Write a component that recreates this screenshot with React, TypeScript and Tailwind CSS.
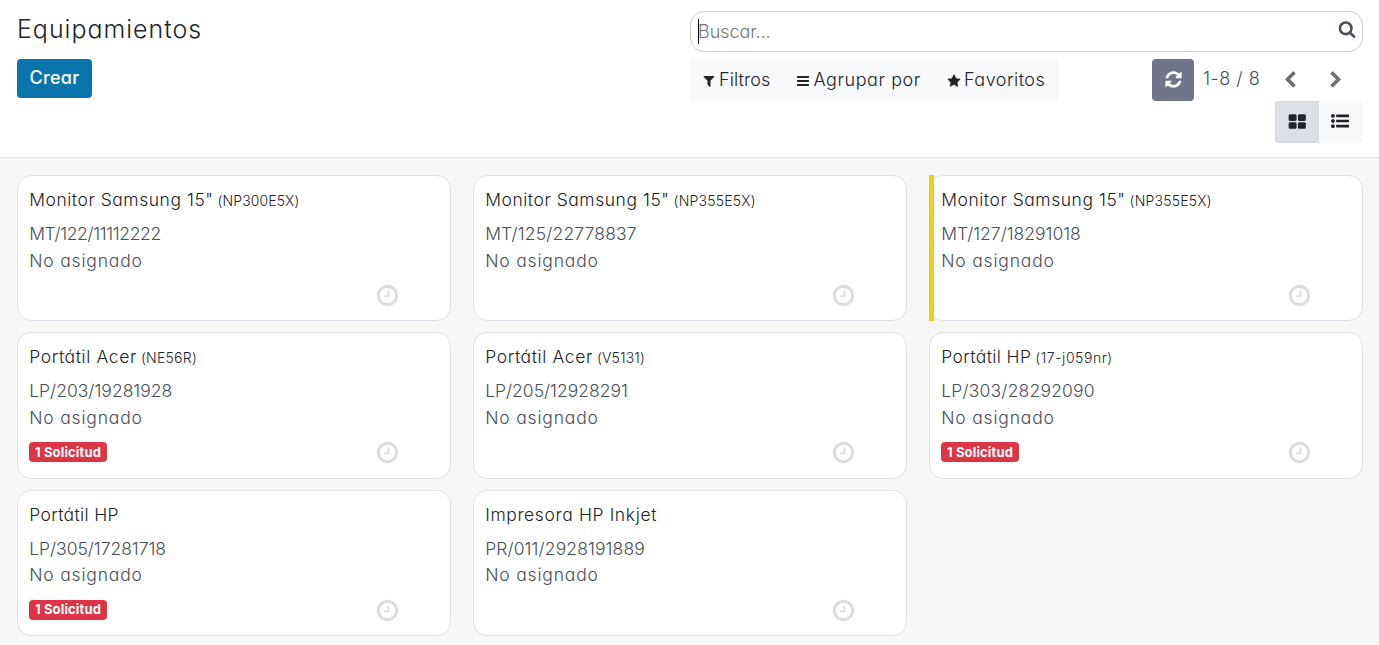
import type { ReactNode } from 'react';

const glyphs = {
  filter: 'M1595 295q17 41-14 70l-493 493v742q0 42-39 59-13 5-25 5-27 0-45-19l-256-256q-19-19-19-45v-486l-493-493q-31-29-14-70 17-39 59-39h1280q42 0 59 39z',
  bars: 'M1664 1344v128q0 26-19 45t-45 19h-1408q-26 0-45-19t-19-45v-128q0-26 19-45t45-19h1408q26 0 45 19t19 45zm0-512v128q0 26-19 45t-45 19h-1408q-26 0-45-19t-19-45v-128q0-26 19-45t45-19h1408q26 0 45 19t19 45zm0-512v128q0 26-19 45t-45 19h-1408q-26 0-45-19t-19-45v-128q0-26 19-45t45-19h1408q26 0 45 19t19 45z',
  star: 'M1728 647q0 22-26 48l-363 354 86 500q1 7 1 20 0 21-10.5 35.5t-30.5 14.5q-19 0-40-12l-449-236-449 236q-22 12-40 12-21 0-31.5-14.5t-10.5-35.5q0-6 2-20l86-500-364-354q-25-27-25-48 0-37 56-46l502-73 225-455q19-41 49-41t49 41l225 455 502 73q56 9 56 46z',
  search: 'M1216 832q0-185-131.5-316.5t-316.5-131.5-316.5 131.5-131.5 316.5 131.5 316.5 316.5 131.5 316.5-131.5 131.5-316.5zm512 832q0 52-38 90t-90 38q-54 0-90-38l-343-342q-179 124-399 124-143 0-273.5-55.5t-225-150-150-225-55.5-273.5 55.5-273.5 150-225 225-150 273.5-55.5 273.5 55.5 225 150 150 225 55.5 273.5q0 220-124 399l343 343q37 37 37 90z',
  refresh: 'M1639 1056q0 5-1 7-64 268-268 434.5t-478 166.5q-146 0-282.5-55t-243.5-157l-129 129q-19 19-45 19t-45-19-19-45v-448q0-26 19-45t45-19h448q26 0 45 19t19 45-19 45l-137 137q71 66 161 102t187 36q134 0 250-65t186-179q11-17 53-117 8-23 30-23h192q13 0 22.5 9.5t9.5 22.5zm25-800v448q0 26-19 45t-45 19h-448q-26 0-45-19t-19-45 19-45l138-138q-148-137-349-137-134 0-250 65t-186 179q-11 17-53 117-8 23-30 23h-199q-13 0-22.5-9.5t-9.5-22.5v-7q65-268 270-434.5t480-166.5q146 0 284 55.5t245 156.5l130-129q19-19 45-19t45 19 19 45z',
  grid: 'M832 1024v384q0 52-38 90t-90 38h-512q-52 0-90-38t-38-90v-384q0-52 38-90t90-38h512q52 0 90 38t38 90zm0-768v384q0 52-38 90t-90 38h-512q-52 0-90-38t-38-90v-384q0-52 38-90t90-38h512q52 0 90 38t38 90zm896 768v384q0 52-38 90t-90 38h-512q-52 0-90-38t-38-90v-384q0-52 38-90t90-38h512q52 0 90 38t38 90zm0-768v384q0 52-38 90t-90 38h-512q-52 0-90-38t-38-90v-384q0-52 38-90t90-38h512q52 0 90 38t38 90z',
  list: 'M384 1408q0 80-56 136t-136 56-136-56-56-136 56-136 136-56 136 56 56 136zm0-512q0 80-56 136t-136 56-136-56-56-136 56-136 136-56 136 56 56 136zm1408 416v192q0 13-9.5 22.5t-22.5 9.5h-1216q-13 0-22.5-9.5t-9.5-22.5v-192q0-13 9.5-22.5t22.5-9.5h1216q13 0 22.5 9.5t9.5 22.5zm-1408-928q0 80-56 136t-136 56-136-56-56-136 56-136 136-56 136 56 56 136zm1408 416v192q0 13-9.5 22.5t-22.5 9.5h-1216q-13 0-22.5-9.5t-9.5-22.5v-192q0-13 9.5-22.5t22.5-9.5h1216q13 0 22.5 9.5t9.5 22.5zm0-512v192q0 13-9.5 22.5t-22.5 9.5h-1216q-13 0-22.5-9.5t-9.5-22.5v-192q0-13 9.5-22.5t22.5-9.5h1216q13 0 22.5 9.5t9.5 22.5z',
  clock: 'M1024 544v448q0 14-9 23t-23 9h-320q-14 0-23-9t-9-23v-64q0-14 9-23t23-9h224v-352q0-14 9-23t23-9h64q14 0 23 9t9 23zm416 352q0-148-73-273t-198-198-273-73-273 73-198 198-73 273 73 273 198 198 273 73 273-73 198-198 73-273zm224 0q0 209-103 385.5t-279.5 279.5-385.5 103-385.5-103-279.5-279.5-103-385.5 103-385.5 279.5-279.5 385.5-103 385.5 103 279.5 279.5 103 385.5z',
  left: 'M1427 301l-531 531 531 531q19 19 19 45t-19 45l-166 166q-19 19-45 19t-45-19l-742-742q-19-19-19-45t19-45l742-742q19-19 45-19t45 19l166 166q19 19 19 45t-19 45z',
  right: 'M1363 877l-742 742q-19 19-45 19t-45-19l-166-166q-19-19-19-45t19-45l531-531-531-531q-19-19-19-45t19-45l166-166q19-19 45-19t45 19l742 742q19 19 19 45t-19 45z',
};

function Icon({ name, className }: { name: keyof typeof glyphs; className: string }) {
  return (
    <svg viewBox="0 0 1792 1792" fill="currentColor" overflow="visible" aria-hidden="true" className={`shrink-0 ${className}`}>
      <path d={glyphs[name]} />
    </svg>
  );
}

type Equipment = {
  name: string;
  nameClass: string;
  model?: string;
  modelClass?: string;
  serial: string;
  serialClass: string;
  request?: boolean;
  flagged?: boolean;
};

const equipment: Equipment[] = [
  { name: 'Monitor Samsung 15"', nameClass: 'tracking-[0.54px]', model: '(NP300E5X)', modelClass: 'tracking-[0.1px]', serial: 'MT/122/11112222', serialClass: 'tracking-[-0.36px]' },
  { name: 'Monitor Samsung 15"', nameClass: 'tracking-[0.54px]', model: '(NP355E5X)', modelClass: 'tracking-[0.2px]', serial: 'MT/125/22778837', serialClass: 'tracking-[0.16px]' },
  { name: 'Monitor Samsung 15"', nameClass: 'tracking-[0.54px]', model: '(NP355E5X)', modelClass: 'tracking-[0.2px]', serial: 'MT/127/18291018', serialClass: 'tracking-[-0.01px]', flagged: true },
  { name: 'Portátil Acer', nameClass: 'tracking-[0.62px]', model: '(NE56R)', modelClass: 'tracking-[0.26px]', serial: 'LP/203/19281928', serialClass: 'tracking-[0.01px]', request: true },
  { name: 'Portátil Acer', nameClass: 'tracking-[0.62px]', model: '(V5131)', modelClass: 'tracking-[0.17px]', serial: 'LP/205/12928291', serialClass: 'tracking-[-0.01px]' },
  { name: 'Portátil HP', nameClass: 'tracking-[0.4px]', model: '(17-j059nr)', modelClass: 'tracking-[0.55px]', serial: 'LP/303/28292090', serialClass: 'tracking-[0.2px]', request: true },
  { name: 'Portátil HP', nameClass: 'tracking-[0.37px]', serial: 'LP/305/17281718', serialClass: 'tracking-[-0.03px]', request: true },
  { name: 'Impresora HP Inkjet', nameClass: 'tracking-[0.63px]', serial: 'PR/011/2928191889', serialClass: 'tracking-[0.11px]' },
];

function Card({ item }: { item: Equipment }) {
  return (
    <article className="relative h-[146.4px] rounded-[14px] border border-[#dee2e6] bg-white pl-[11.2px] pt-[10px] text-[17.5px] leading-[27px]">
      {item.flagged && <span className="absolute -left-px -top-px h-[146px] w-[5px] bg-[#f4cc1f]" />}
      <h2 className="flex h-[27px] items-baseline whitespace-pre text-[#212529]">
        <span className={`font-[360] ${item.nameClass}`}>{item.name}</span>
        {item.model && <span className={`ml-[4px] text-[14px] ${item.modelClass}`}>{item.model}</span>}
      </h2>
      <p className={`mt-[7px] whitespace-pre font-[330] text-[#495057] ${item.serialClass}`}>{item.serial}</p>
      <p className="-mt-[0.4px] font-[330] tracking-[0.82px] text-[#495057]">No asignado</p>
      <div className="mt-[8.8px] flex h-[25px] items-center justify-between pr-[50.5px]">
        {item.request ? (
          <span className="-ml-[0.2px] flex h-[20px] w-[78px] items-center justify-center rounded-[4px] bg-[#dc3545] pb-[0.4px] text-[13px] font-bold leading-none tracking-[0.15px] text-white">1 Solicitud</span>
        ) : (
          <span />
        )}
        <Icon name="clock" className="mt-[1.2px] size-[25px] text-[#dedede]" />
      </div>
    </article>
  );
}

function MenuButton({ icon, children, className }: { icon: 'filter' | 'bars' | 'star'; children: ReactNode; className: string }) {
  return (
    <button className={`flex items-center whitespace-pre ${className}`}>
      <Icon name={icon} className="mt-[3px] size-[14px]" />
      {children}
    </button>
  );
}

export default function App() {
  return (
    <div className="flex h-[645px] w-[1379px] flex-col overflow-hidden bg-[#f7f7f7] font-['Inter',sans-serif] text-[18px] font-light text-[#212529] [font-feature-settings:'cv11']">
      <header className="flex h-[158px] shrink-0 justify-between border-b border-[#dee2e6] bg-white pl-[17px] pr-[16px] pt-[11px]">
        <div className="flex flex-col items-start">
          <h1 className="h-[48px] text-[25px] leading-[36px] tracking-[0.98px]">Equipamientos</h1>
          <button className="flex h-[39px] w-[75px] items-center justify-center rounded-[4px] bg-[#0a75ad] pb-[2px] font-medium tracking-[0.35px] text-white">Crear</button>
        </div>
        <div className="flex w-[673px] flex-col">
          <div className="flex h-[41px] items-center rounded-[14px] border border-[#c9ccd0] pl-[7px] pr-[6.5px]">
            <span className="h-[25px] w-px bg-black" />
            <span className="-ml-px flex-1 tracking-[-0.05px] text-[#757575]">Buscar...</span>
            <Icon name="search" className="mb-[5px] size-[18px] text-[#495057]" />
          </div>
          <div className="mt-[7px] flex h-[42px] items-center justify-between">
            <div className="flex h-[42px] w-[369px] items-center rounded-[4px] bg-[#f8f9fb] pb-[2px] pl-[12px] font-[330]">
              <MenuButton icon="filter" className="w-[94px] gap-[3px] tracking-[0.06px]">Filtros</MenuButton>
              <MenuButton icon="bars" className="w-[150.5px] gap-[3.5px] tracking-[0.56px]">Agrupar por</MenuButton>
              <MenuButton icon="star" className="gap-[3.5px] tracking-[0.46px]">Favoritos</MenuButton>
            </div>
            <div className="flex h-[42px] w-[211px] items-center text-[#495057]">
              <button className="flex size-[42px] items-center justify-center rounded-[4px] bg-[#71758a] text-white" aria-label="Actualizar">
                <Icon name="refresh" className="mb-px size-[19px]" />
              </button>
              <span className="ml-[9px] w-[78px] whitespace-pre pb-[3px] tracking-[0.5px]">1-8 / 8</span>
              <Icon name="left" className="mb-px size-[18px] text-[#6c7075]" />
              <Icon name="right" className="mb-px ml-[28px] size-[18px] text-[#6c7075]" />
            </div>
          </div>
          <div className="flex h-[42px] self-end overflow-hidden rounded-[4px]">
            <button className="flex w-[44px] items-center justify-center border border-[#d3d9df] bg-[#dae0e6]" aria-label="Kanban">
              <Icon name="grid" className="size-[18.5px]" />
            </button>
            <button className="flex w-[44px] items-center justify-center bg-[#f8f9fb] pb-[2px] pr-[2px]" aria-label="Lista">
              <Icon name="list" className="size-[18px]" />
            </button>
          </div>
        </div>
      </header>
      <main className="grid grid-cols-[434px_434px_434px] gap-x-[22px] gap-y-[11px] pl-[17px] pt-[17px]">
        {equipment.map((item) => (
          <Card key={item.serial} item={item} />
        ))}
      </main>
    </div>
  );
}
